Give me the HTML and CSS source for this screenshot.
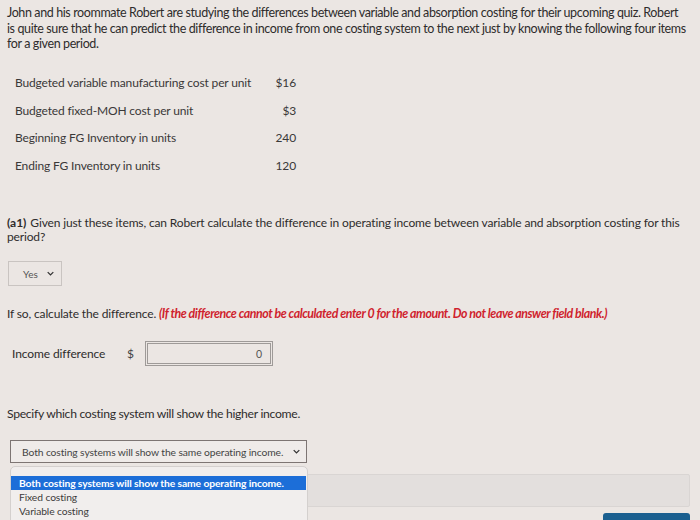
FILE: index.html
```html
<!DOCTYPE html>
<html>
<head>
<meta charset="utf-8">
<link rel="stylesheet" href="styles.css">
</head>
<body>
<div class="page">
  <p class="intro">John and his roommate Robert are studying the differences between variable and absorption costing for their upcoming quiz. Robert<br>is quite sure that he can predict the difference in income from one costing system to the next just by knowing the following four items for a given period.</p>

  <div class="items">
    <div class="item"><span class="label">Budgeted variable manufacturing cost per unit</span><span class="val">$16</span></div>
    <div class="item"><span class="label">Budgeted fixed-MOH cost per unit</span><span class="val">$3</span></div>
    <div class="item"><span class="label">Beginning FG Inventory in units</span><span class="val">240</span></div>
    <div class="item"><span class="label">Ending FG Inventory in units</span><span class="val">120</span></div>
  </div>

  <p class="question"><b>(a1)</b> Given just these items, can Robert calculate the difference in operating income between variable and absorption costing for this period?</p>

  <div class="yes-select"><span>Yes</span><svg class="chev" viewBox="0 0 10 6" width="7" height="5"><path d="M1 1 L5 5 L9 1" fill="none" stroke="#333" stroke-width="1.8"/></svg></div>

  <p class="calc">If so, calculate the difference. <span class="note">(If the difference cannot be calculated enter 0 for the amount. Do not leave answer field blank.)</span></p>

  <div class="income">
    <span class="ilabel">Income difference</span>
    <span class="dollar">$</span>
    <div class="input"><span>0</span></div>
  </div>

  <p class="specify">Specify which costing system will show the higher income.</p>

  <div class="dd-area">
    <div class="dd-select"><span>Both costing systems will show the same operating income.</span><svg class="chev" viewBox="0 0 10 6" width="7" height="5"><path d="M1 1 L5 5 L9 1" fill="none" stroke="#333" stroke-width="1.8"/></svg></div>
    <div class="bar"></div>
    <div class="btn-row"><div class="btn"></div></div>
    <div class="dd-list">
      <div class="opt sel">Both costing systems will show the same operating income.</div>
      <div class="opt">Fixed costing</div>
      <div class="opt">Variable costing</div>
    </div>
  </div>
</div>
</body>
</html>
```

FILE: styles.css
```css
html, body {
  margin: 0;
  padding: 0;
  background: #ebe6e3;
}
body {
  font-family: Lato, "Open Sans", sans-serif;
  color: #2e2c2c;
  width: 700px;
  height: 520px;
  overflow: hidden;
}
.page {
  padding: 5px 7px 0 7px;
}
.intro {
  margin: 0;
  font-size: 12.5px;
  line-height: 15.5px;
  letter-spacing: -0.39px;
  width: 686px;
}
.items {
  margin-top: 17px;
  width: 281px;
  padding-left: 8px;
}
.item {
  display: flex;
  justify-content: space-between;
  align-items: center;
  height: 27.7px;
  font-size: 12px;
  letter-spacing: -0.15px;
  color: #3a3838;
}
.question {
  margin: 37px 0 0 0;
  font-size: 12px;
  line-height: 14px;
  letter-spacing: -0.15px;
  width: 684px;
}
.question b {
  font-weight: 700;
  letter-spacing: 0;
  margin-right: 1px;
}
.yes-select {
  margin-top: 17px;
  margin-left: 1px;
  width: 54px;
  height: 25px;
  border: 1px solid #c9c4c1;
  box-sizing: border-box;
  display: flex;
  align-items: center;
  justify-content: space-between;
  padding: 0 7px 0 14px;
  font-size: 10px;
  color: #555;
}
.calc {
  margin: 20px 0 0 0;
  font-size: 12px;
  letter-spacing: -0.15px;
  line-height: 15px;
}
.note {
  color: #d01f2e;
  font-style: italic;
  font-weight: 700;
  font-size: 12.4px;
  letter-spacing: -0.45px;
}
.income {
  margin-top: 20px;
  display: flex;
  align-items: center;
  height: 25px;
  font-size: 12px;
  letter-spacing: -0.1px;
}
.ilabel {
  margin-left: 5px;
  width: 115px;
}
.dollar {
  width: 18px;
  color: #444;
}
.input {
  width: 128px;
  height: 25px;
  box-sizing: border-box;
  border: 3px double #9e9a98;
  display: flex;
  align-items: center;
  justify-content: flex-end;
  padding-right: 8px;
  font-size: 10.5px;
  color: #555;
}
.specify {
  margin: 41px 0 0 0;
  font-size: 12.2px;
  letter-spacing: -0.3px;
  line-height: 14px;
}
.dd-area {
  position: relative;
  margin-top: 19px;
}
.dd-select {
  margin-left: 3px;
  width: 297px;
  height: 23px;
  box-sizing: border-box;
  border: 1px solid #7d7573;
  display: flex;
  align-items: center;
  justify-content: space-between;
  padding: 0 6px 0 11px;
  font-size: 10.3px;
  letter-spacing: -0.1px;
  color: #444;
  background: #efebe9;
}
.bar {
  margin-top: 11px;
  margin-left: 3px;
  width: 680px;
  height: 33px;
  box-sizing: border-box;
  border: 1px solid #d9d5d3;
  background: #e3dfdd;
  border-radius: 2px;
}
.btn-row {
  display: flex;
  justify-content: flex-end;
  width: 683px;
  margin-top: 6px;
}
.btn {
  width: 87px;
  height: 10px;
  background: #1b5f8f;
  border-radius: 3px 3px 0 0;
}
.dd-list {
  position: absolute;
  left: 3px;
  top: 26px;
  width: 298px;
  height: 60px;
  box-sizing: border-box;
  background: #f1eeed;
  border: 1px solid #d4d0ce;
  border-radius: 5px;
  padding-top: 9px;
  font-size: 10.3px;
  letter-spacing: -0.1px;
  color: #3d3b3b;
}
.opt {
  height: 14px;
  line-height: 14px;
  padding-left: 8px;
}
.opt.sel {
  background: #1c6ed8;
  color: #fff;
  font-weight: 700;
  margin-right: 1px;
}
```
